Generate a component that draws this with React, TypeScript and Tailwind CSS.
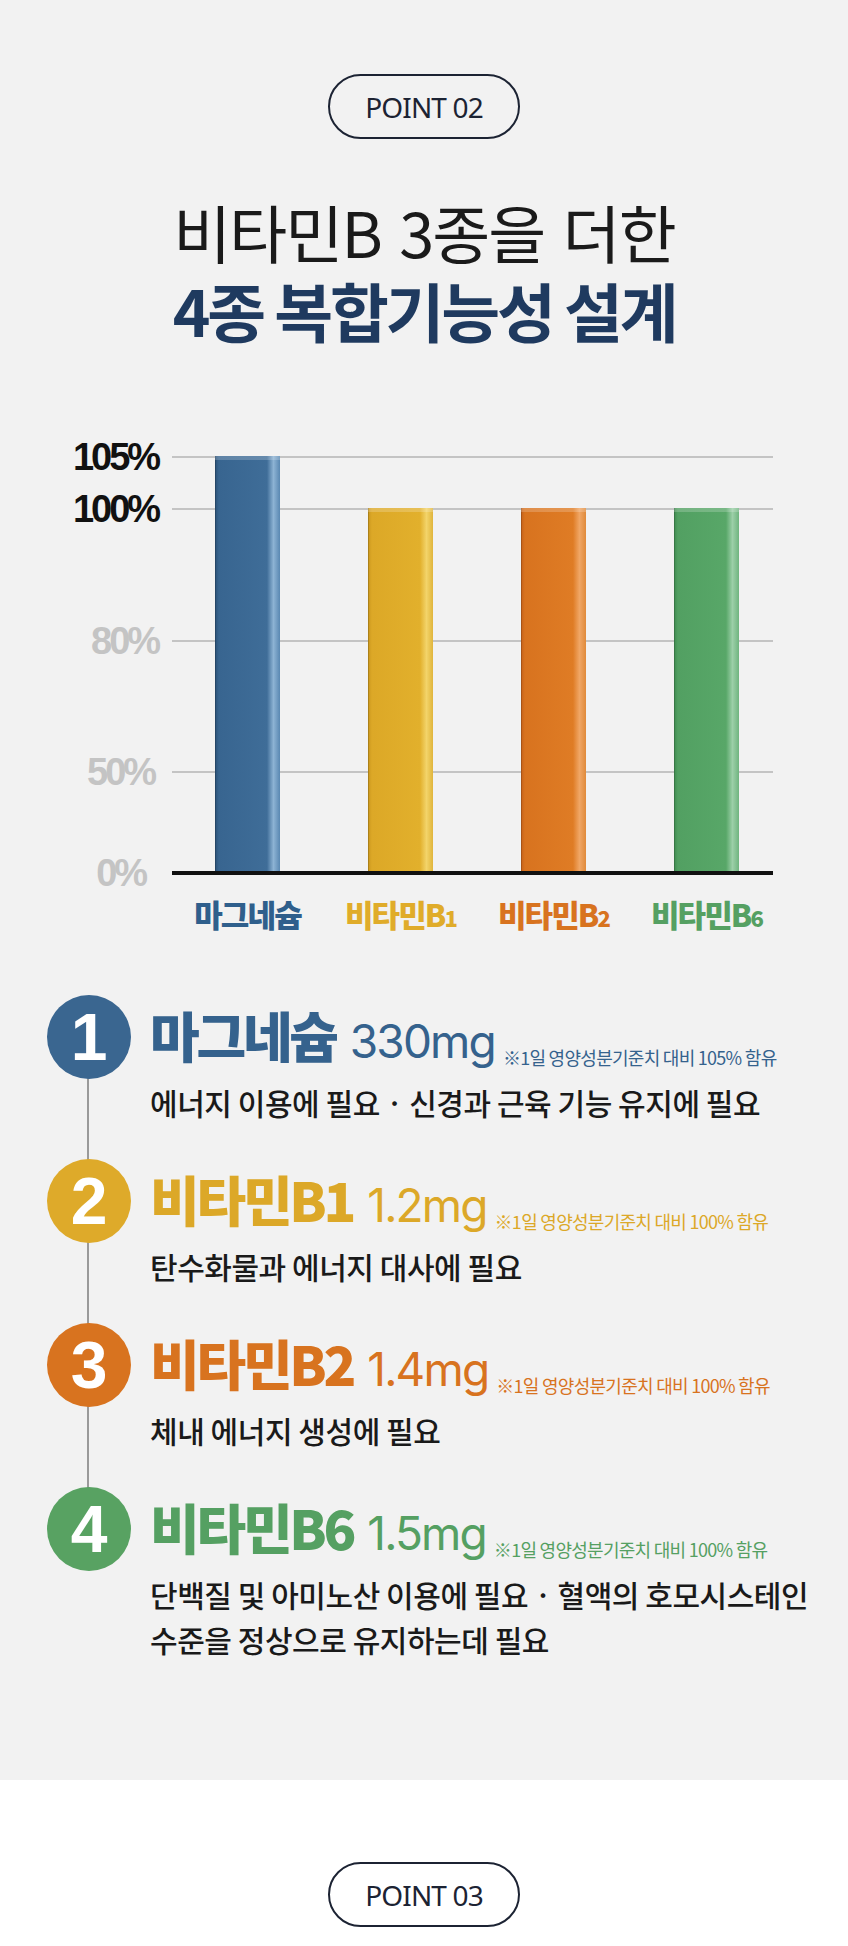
import React from 'react';

type Nutrient = {
    no: number;
    name: string;
    amount: string;
    note: string;
    color: string;
    circle: string;
    desc: string[];
};

const nutrients: Nutrient[] = [
    {
        no: 1,
        name: '마그네슘',
        amount: '330mg',
        note: '※1일 영양성분기준치 대비 105% 함유',
        color: 'text-[#35628d]',
        circle: 'bg-[#3a6690]',
        desc: ['에너지 이용에 필요 · 신경과 근육 기능 유지에 필요'],
    },
    {
        no: 2,
        name: '비타민B1',
        amount: '1.2mg',
        note: '※1일 영양성분기준치 대비 100% 함유',
        color: 'text-[#dca828]',
        circle: 'bg-[#deaa2a]',
        desc: ['탄수화물과 에너지 대사에 필요'],
    },
    {
        no: 3,
        name: '비타민B2',
        amount: '1.4mg',
        note: '※1일 영양성분기준치 대비 100% 함유',
        color: 'text-[#d8731f]',
        circle: 'bg-[#d8731f]',
        desc: ['체내 에너지 생성에 필요'],
    },
    {
        no: 4,
        name: '비타민B6',
        amount: '1.5mg',
        note: '※1일 영양성분기준치 대비 100% 함유',
        color: 'text-[#55a062]',
        circle: 'bg-[#58a262]',
        desc: ['단백질 및 아미노산 이용에 필요 · 혈액의 호모시스테인', '수준을 정상으로 유지하는데 필요'],
    },
];

const bars = [
    { label: '마그네슘', sub: '', height: 'h-[415px]', fill: 'bg-[linear-gradient(90deg,#2a5075_0%,#386590_6%,#3f6d98_80%,#8db3d4_90%,#5a88b2_100%)]', text: 'text-[#2f5f8c]' },
    { label: '비타민B', sub: '1', height: 'h-[363px]', fill: 'bg-[linear-gradient(90deg,#c9961d_0%,#dca827_6%,#e2b02c_80%,#f3d46a_90%,#e0b53c_100%)]', text: 'text-[#e0ac2a]' },
    { label: '비타민B', sub: '2', height: 'h-[363px]', fill: 'bg-[linear-gradient(90deg,#c4601a_0%,#d8731f_6%,#df7c25_80%,#f0a665_90%,#e08a3a_100%)]', text: 'text-[#d8731f]' },
    { label: '비타민B', sub: '6', height: 'h-[363px]', fill: 'bg-[linear-gradient(90deg,#3f8a50_0%,#52a062_6%,#58a768_80%,#9ccfa8_90%,#6fb47f_100%)]', text: 'text-[#55a062]' },
];

// y-axis rows: label + grid line (non-linear scale, as in the design)
const axisRows = [
    { label: '105%', gap: 'mt-0', tone: 'text-[#111]', pad: 'pr-0', line: 'h-[2px] bg-[#c4c4c4]' },
    { label: '100%', gap: 'mt-[12px]', tone: 'text-[#111]', pad: 'pr-0', line: 'h-[2px] bg-[#c4c4c4]' },
    { label: '80%', gap: 'mt-[92px]', tone: 'text-[#c4c4c4]', pad: 'pr-0', line: 'h-[2px] bg-[#c4c4c4]' },
    { label: '50%', gap: 'mt-[91px]', tone: 'text-[#c4c4c4]', pad: 'pr-[4px]', line: 'h-[2px] bg-[#c4c4c4]' },
    { label: '0%', gap: 'mt-[61px]', tone: 'text-[#c4c4c4]', pad: 'pr-[13px]', line: 'h-[4px] bg-[#111]' },
];

const PointPill = ({ label }: { label: string }) => (
    <div className="mx-auto flex h-[65px] w-[192px] items-center justify-center rounded-full border-[2.5px] border-[#1c2333]">
        <span className="font-['Noto_Sans',sans-serif] text-[28px] tracking-[-0.03em] text-[#1c2333]">{label}</span>
    </div>
);

const App = () => {
    return (
        <div className="w-[848px] font-['Noto_Sans_CJK_KR',sans-serif]">
            <section className="h-[1780px] bg-[#f2f2f2] pt-[74px]">
                <PointPill label="POINT 02" />

                <div className="mt-[53px] text-center leading-[78px]">
                    <div className="text-[63px] font-normal tracking-[-0.03em] text-[#1a1a1a] [word-spacing:6px]">비타민B 3종을 더한</div>
                    <div className="text-[64px] font-bold tracking-[-0.05em] text-[#1f3a5f]">4종 복합기능성 설계</div>
                </div>

                {/* chart */}
                <div className="relative mt-[89px]">
                    <div className="flex flex-col">
                        {axisRows.map(r => (
                            <div key={r.label} className={`flex h-[40px] items-center ${r.gap}`}>
                                <span className={`w-[158px] text-right font-['Liberation_Sans',sans-serif] text-[38px] font-bold leading-[40px] tracking-[-0.08em] ${r.tone} ${r.pad}`}>
                                    {r.label}
                                </span>
                                <div className={`ml-[14px] w-[601px] ${r.line}`} />
                            </div>
                        ))}
                    </div>

                    <div className="absolute left-[171px] top-0 flex h-[434px] items-end">
                        {bars.map((b, i) => (
                            <div key={i} className="flex w-[153px] justify-center">
                                <div className={`w-[65px] ${b.height} ${b.fill} shadow-[inset_0_4px_0_rgba(255,255,255,0.2),inset_1px_0_0_rgba(0,0,0,0.15)]`} />
                            </div>
                        ))}
                    </div>
                </div>

                <div className="mt-[3px] flex pl-[171px]">
                    {bars.map((b, i) => (
                        <div key={i} className={`w-[153px] text-center text-[31px] font-black leading-[36px] tracking-[-0.06em] ${b.text}`}>
                            {b.label}
                            {b.sub && <span className="text-[22px]">{b.sub}</span>}
                        </div>
                    ))}
                </div>

                {/* list */}
                <div className="relative mt-[60px] flex flex-col gap-[34px] pl-[47px]">
                    <div className="absolute left-[87px] top-[42px] h-[489px] w-[2px] bg-[#9a9a9a]" />
                    {nutrients.map(n => (
                        <div key={n.no} className="relative flex items-start gap-[19px]">
                            <div className={`flex h-[84px] w-[84px] shrink-0 items-center justify-center rounded-full ${n.circle}`}>
                                <span className="font-['Liberation_Sans',sans-serif] text-[66px] font-bold leading-none text-white">{n.no}</span>
                            </div>
                            <div className="pt-[10px]">
                                <div className={`whitespace-nowrap text-[54px] font-black leading-[60px] tracking-[-0.06em] ${n.color}`}>
                                    {n.name}
                                    <span className="ml-[14px] font-['Inter',sans-serif] text-[46px] font-normal leading-none tracking-[-0.04em]">{n.amount}</span>
                                    <span className="ml-[8px] align-[-7px] text-[18px] font-normal leading-none tracking-[-0.04em]">{n.note}</span>
                                </div>
                                <div className="mt-[14px] text-[30px] font-medium leading-[45px] tracking-[-0.015em] text-[#1a1a1a]">
                                    {n.desc.map(line => (
                                        <div key={line}>{line}</div>
                                    ))}
                                </div>
                            </div>
                        </div>
                    ))}
                </div>
            </section>

            <section className="h-[166px] bg-white pt-[82px]">
                <PointPill label="POINT 03" />
            </section>
        </div>
    );
};

export default App;
